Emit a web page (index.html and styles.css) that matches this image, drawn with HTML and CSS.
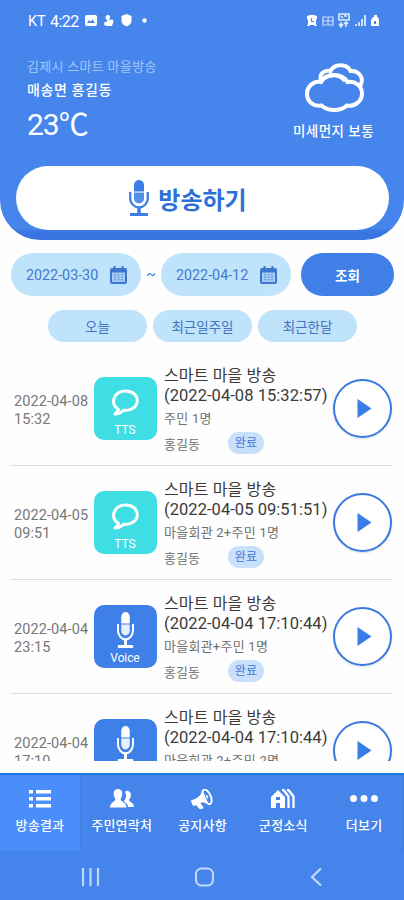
FILE: index.html
```html
<!DOCTYPE html>
<html lang="ko">
<head>
<meta charset="utf-8">
<title>스마트 마을방송</title>
<link rel="stylesheet" href="styles.css">
</head>
<body>
<svg class="defs" width="0" height="0" aria-hidden="true">
  <symbol id="mic" viewBox="0 0 20 38" preserveAspectRatio="none">
    <path d="M5 12.500V6a5 5 0 0 1 10 0v6.500z"/>
    <path d="M5 13.500h10v6a5 5 0 0 1-10 0z" opacity=".88"/>
    <path d="M1.200 13v6.500a8.800 8.800 0 0 0 17.600 0V13" fill="none" stroke="currentColor" stroke-width="2.300"/>
    <path d="M8.300 28h3.400v6H19v3H1v-3h7.300z"/>
  </symbol>
  <symbol id="calendar" viewBox="0 0 17 18">
    <path d="M2 2h1.500V0h2v2h6V0h2v2H15a2 2 0 0 1 2 2v12a2 2 0 0 1-2 2H2a2 2 0 0 1-2-2V4a2 2 0 0 1 2-2z"/>
    <path d="M2 6.500h13v9.500H2z" fill="#a5cdf8"/>
    <path d="M4 8.800h2m1.500 0h2m1.500 0h2M4 11.300h2m1.500 0h2m1.500 0h2M4 13.800h2m1.500 0h2m1.500 0h2" stroke="currentColor" stroke-width="1.100" opacity=".7"/>
  </symbol>
  <symbol id="bubble" viewBox="0 0 28 27">
    <path d="M7.500 20.500C-2 14 3.500 2 14.500 2 22 2 26.300 6.500 26.300 11.700 26.300 18.500 19 22 12.500 21.300 10 24 7 25 4 25c2-1.500 3.300-2.700 3.500-4.500z" fill="none" stroke="currentColor" stroke-width="3" stroke-linejoin="round"/>
  </symbol>
  <symbol id="play" viewBox="0 0 14 19"><path d="M0 0l14 9.500L0 19z"/></symbol>
</svg>

<header class="header">
  <div class="status">
    <span class="carrier">KT</span><span class="clock">4:22</span>
    <svg class="status-left" viewBox="0 0 64 14">
      <path fill-rule="evenodd" d="M2 1h8a2 2 0 0 1 2 2v7a2 2 0 0 1-2 2H2a2 2 0 0 1-2-2V3a2 2 0 0 1 2-2zM2 9h8L7.500 5.500l-2 2L4 6z"/>
      <path d="M22 1c3 0 4 2 2 5 5-1 5 1 4 3l-1 3h-5c-3 0-4-3-2-4 2 0 3-1 2-2-2-1-2-4 0-5z"/>
      <path d="M41.500 0l5 2v4.500c0 3-2 5-5 6-3-1-5-3-5-6V2z"/>
      <circle cx="59.500" cy="6.500" r="2.200"/>
    </svg>
    <svg class="status-right" viewBox="0 0 74 16">
      <path fill-rule="evenodd" d="M1 3l3-1h4l3 1v3l-1 1v4l1 2H9L8 12H4l-1 1H1l1-2V7L1 6zm4 2v4h3V8H6V5z"/>
      <path d="M21 4h-4v8h4m-4-4h4m1-4h5v8h-5zm0 4h5" fill="none" stroke="currentColor" stroke-width="1.200" opacity=".75"/>
      <path d="M33 1h10v6H33zm2 2l2 2m1-2h3M35 9v4m-2-2l2 3 2-3m3 3V9m-2 2l2-2 2 2" fill="none" stroke="currentColor" stroke-width="1.500" opacity=".85"/>
      <path d="M49 11h2v2h-2zM52 9h2v4h-2zM55 6h2v7h-2zM58 2h2v11h-2z" opacity=".75"/>
      <path fill-rule="evenodd" d="M68 2h3v2h1l1 3v6h-8V7l2-3h1zm0 6v3h2V8z"/>
    </svg>
  </div>
  <div class="weather">
    <div class="place">
      <div class="service">김제시 스마트 마을방송</div>
      <div class="user">매송면 홍길동</div>
      <div class="temp">23℃</div>
    </div>
    <div class="dust">
      <svg class="cloud" viewBox="0 0 60 50">
        <path d="M17 18C15 12 20 7.500 26.500 9 30 1.500 43 1 46.500 9 54 8 60 15 57 22c0 2-1 3-2 4"/>
        <path d="M17 20c5-9.500 21-9.500 26.500 0C51 18.500 58 24 58 31.500S51 45 43 43.500c-6.500 6-19 6-25.500 0C9.500 45 3 39.500 3 32s6.500-13.500 14-12z"/>
        <path d="M19 17c8-6 17-4.500 22 2"/>
      </svg>
      <div class="dust-label">미세먼지 보통</div>
    </div>
  </div>
  <button class="broadcast"><svg class="broadcast-mic"><use href="#mic"/></svg><span>방송하기</span></button>
</header>

<section class="filters">
  <div class="range">
    <div class="date"><span>2022-03-30</span><svg><use href="#calendar"/></svg></div>
    <span class="tilde">~</span>
    <div class="date"><span>2022-04-12</span><svg><use href="#calendar"/></svg></div>
    <button class="search">조회</button>
  </div>
  <div class="chips"><button>오늘</button><button>최근일주일</button><button>최근한달</button></div>
</section>

<main class="list">
  <article class="row">
    <div class="when">2022-04-08<br>15:32</div>
    <div class="type tts"><svg><use href="#bubble"/></svg><span>TTS</span></div>
    <div class="info"><h2>스마트 마을 방송</h2><div class="stamp">(2022-04-08 15:32:57)</div><div class="target">주민 1명</div><div class="sender"><span>홍길동</span><b>완료</b></div></div>
    <button class="play"><svg><use href="#play"/></svg></button>
  </article>
  <article class="row">
    <div class="when">2022-04-05<br>09:51</div>
    <div class="type tts"><svg><use href="#bubble"/></svg><span>TTS</span></div>
    <div class="info"><h2>스마트 마을 방송</h2><div class="stamp">(2022-04-05 09:51:51)</div><div class="target">마을회관 2+주민 1명</div><div class="sender"><span>홍길동</span><b>완료</b></div></div>
    <button class="play"><svg><use href="#play"/></svg></button>
  </article>
  <article class="row">
    <div class="when">2022-04-04<br>23:15</div>
    <div class="type voice"><svg><use href="#mic"/></svg><span>Voice</span></div>
    <div class="info"><h2>스마트 마을 방송</h2><div class="stamp">(2022-04-04 17:10:44)</div><div class="target">마을회관+주민 1명</div><div class="sender"><span>홍길동</span><b>완료</b></div></div>
    <button class="play"><svg><use href="#play"/></svg></button>
  </article>
  <article class="row">
    <div class="when">2022-04-04<br>17:10</div>
    <div class="type voice"><svg><use href="#mic"/></svg></div>
    <div class="info"><h2>스마트 마을 방송</h2><div class="stamp">(2022-04-04 17:10:44)</div><div class="target">마을회관 2+주민 2명</div></div>
    <button class="play"><svg><use href="#play"/></svg></button>
  </article>
</main>

<nav class="tabs">
  <a class="tab active"><svg viewBox="0 0 24 20"><path d="M1 1h4v3.500H1zm7 0h15v3.500H8zM1 8h4v3.500H1zm7 0h15v3.500H8zM1 15h4v3.500H1zm7 0h15v3.500H8z"/></svg><span>방송결과</span></a>
  <a class="tab"><svg viewBox="0 0 24 20"><path d="M15 3c1-1 2-1.500 3-1 4 1 3.500 6 1 9 0 2 5 2.500 5 7h-6c0-4-4-4-4-6 2-2 3-6 1-9z"/><path d="M8 0c5.500 0 5 7 2.500 10 0 3 6 3 6 8.500H0C0 13 5.500 13 5.500 10 3 7 2.500 0 8 0z"/></svg><span>주민연락처</span></a>
  <a class="tab"><svg viewBox="0 0 24 20"><g transform="rotate(-24 12 10)"><path d="M1 7h5c4 0 7-1 10-5v16c-3-4-5-5-7-5l1 6H6l-2-6H1z"/><ellipse cx="17.500" cy="10" rx="3.700" ry="7.800" fill="none" stroke="currentColor" stroke-width="1.900"/><path d="M17 8c2 0 2 4 0 4z"/></g></svg><span>공지사항</span></a>
  <a class="tab"><svg viewBox="0 0 24 20"><path fill-rule="evenodd" d="M0 8l7-7 7 7v11H9v-5H5v5H0zm5 0v3h4V8z"/><path d="M11 1h1.500L17.500 7.500V19M16 1h1.500L22.500 7.500V19" fill="none" stroke="currentColor" stroke-width="2.300"/></svg><span>군정소식</span></a>
  <a class="tab"><svg class="more" viewBox="0 0 28 20"><circle cx="3.500" cy="9.500" r="3.500"/><circle cx="14" cy="9.500" r="3.500"/><circle cx="24.500" cy="9.500" r="3.500"/></svg><span>더보기</span></a>
</nav>
<footer class="system">
  <svg viewBox="0 0 18 20"><path d="M1.500 1v18M9 1v18M16.500 1v18"/></svg>
  <svg viewBox="0 0 20 20"><rect x="1" y="1" width="18" height="18" rx="6"/></svg>
  <svg viewBox="0 0 18 20"><path d="M12.500 1.500L3.500 10l9 8.500"/></svg>
</footer>
</body>
</html>
```

FILE: styles.css
```css
* { box-sizing: border-box; }
body {
  margin: 0;
  height: 900px;
  overflow: hidden;
  display: flex;
  flex-direction: column;
  background: #fefefe;
  font-family: Roboto, "Noto Sans CJK KR", sans-serif;
}
svg { display: block; fill: currentColor; }
.defs { position: absolute; }
button { border: 0; padding: 0; margin: 0; font: inherit; }
span, h2, .service, .user, .stamp, .target { white-space: nowrap; }

.header {
  height: 240px;
  flex: none;
  background: linear-gradient(#4685ec 0 228px, #3875e1 232px);
  border-radius: 0 0 40px 40px;
  color: #fff;
}
.status { display: flex; height: 42px; padding: 0 24px 0 28px; align-items: center; }
.carrier { font-size: 14.500px; width: 22px; padding-top: 1px; }
.clock { font-size: 16px; width: 34.500px; letter-spacing: -.5px; }
.status-left { width: 64px; height: 14px; }
.status-right { width: 74px; height: 16px; margin-left: auto; }
.weather { display: flex; justify-content: space-between; height: 124px; padding: 13px 29px 0 27px; }
.service { font-size: 13px; line-height: 23px; letter-spacing: .3px; color: #a3c6f8; }
.user { font-size: 14px; line-height: 25px; letter-spacing: .6px; font-weight: 500; }
.temp { font-size: 30px; line-height: 43px; letter-spacing: -1px; }
.dust { width: 82px; }
.cloud { width: 60px; height: 50px; margin: 7px 0 0 11px; fill: none; stroke: #fff; stroke-width: 4; }
.dust-label { font-size: 13.500px; line-height: 22px; letter-spacing: .45px; margin-top: 8px; font-weight: 500; white-space: nowrap; }
.broadcast {
  display: flex;
  align-items: center;
  justify-content: center;
  gap: 9px;
  width: 373px;
  height: 64px;
  margin-left: 16px;
  padding-right: 29px;
  border-radius: 32px;
  background: #fff;
  color: #2d70d8;
  font-size: 24px;
  font-weight: 700;
}
.broadcast-mic { width: 20px; height: 38px; color: #3d7ee6; }

.filters { height: 112px; flex: none; padding: 13px 10px 0 11px; color: #4479cc; }
.range { display: flex; height: 43px; }
.date {
  display: flex;
  align-items: center;
  justify-content: space-between;
  width: 130px;
  padding: 0 14px 0 15px;
  border-radius: 22px;
  background: #bfe3fb;
  font-size: 14.300px;
}
.date svg { width: 17px; height: 18px; color: #3d76d0; }
.tilde { width: 20px; text-align: center; line-height: 43px; font-size: 14px; }
.search { width: 93px; margin-left: auto; border-radius: 22px; background: #3f7fe6; color: #fff; font-size: 13.500px; font-weight: 700; }
.chips { display: flex; gap: 6px; padding: 14px 0 0 37px; }
.chips button { width: 99px; height: 32px; padding-bottom: 1px; border-radius: 16px; background: #bfe3fb; color: #4474bf; font-size: 13.500px; }

.list { height: 409px; flex: none; overflow: hidden; padding: 0 11px; }
.row { display: flex; height: 114px; border-bottom: 1.500px solid #ddd; }
.when { width: 82.500px; padding: 41px 0 0 3px; font-size: 14.500px; line-height: 17.500px; letter-spacing: .1px; color: #777; white-space: nowrap; }
.type {
  display: flex;
  flex-direction: column;
  align-items: center;
  width: 63px;
  height: 63px;
  margin-top: 25px;
  border-radius: 10px;
  color: #fff;
  font-size: 12px;
  line-height: 14px;
}
.tts { background: #3fdde4; }
.voice { background: #3e80e8; }
.tts svg { width: 28px; height: 27px; margin: 12px 0 7px; }
.voice svg { width: 17px; height: 38px; margin: 6px 0 2px; }
.voice span { letter-spacing: -.1px; }
.info { width: 176px; padding: 14px 0 0 7.500px; color: #707070; font-size: 13px; }
h2 { margin: 0; color: #3a3a3a; font-size: 16px; line-height: 20px; letter-spacing: .15px; font-weight: 400; }
.stamp { color: #3a3a3a; font-size: 16.500px; line-height: 20px; letter-spacing: .05px; }
.target { line-height: 25px; letter-spacing: .25px; }
.sender { display: flex; align-items: center; height: 24px; }
.sender b { width: 36px; height: 22px; margin-left: 28px; border-radius: 11px; background: #c9e0fb; color: #3c78d8; font-size: 12px; line-height: 22px; text-align: center; font-weight: 400; }
.play {
  display: flex;
  align-items: center;
  justify-content: center;
  flex: none;
  width: 59px;
  height: 59px;
  margin-top: 27px;
  border: 2px solid #3a7ae0;
  border-radius: 50%;
  background: #fff;
  color: #3a7de8;
  box-shadow: 0 1px 2px #0002;
}
.play svg { width: 15px; height: 19px; margin-left: 4px; }

.tabs { display: grid; grid-template-columns: repeat(5, 1fr); height: 77px; flex: none; margin-top: 12px; border-top: 2px solid #1c77df; background: #4584ea; color: #fff; }
.tab { display: flex; flex-direction: column; align-items: center; padding-top: 14px; border-right: 1px solid #417fe5; font-size: 13px; letter-spacing: .2px; font-weight: 500; line-height: 20px; }
.tab:nth-child(n+2) { padding-left: 2px; }
.tab svg { width: 24px; height: 20px; margin-bottom: 7px; }
.tab svg.more { width: 28px; }
.active { background: #4a8efc; }
.system { display: flex; flex: 1; align-items: center; padding-top: 3px; justify-content: space-between; padding-left: 81px; padding-right: 77px; background: #4584ea; }
.system svg { height: 20px; width: 19px; fill: none; stroke: #bfd9fa; stroke-width: 2.200; }
```
